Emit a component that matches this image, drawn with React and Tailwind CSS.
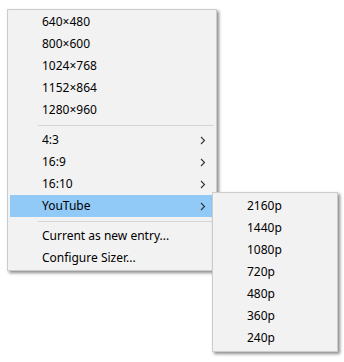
import React from "react";

function Chevron() {
  return (
    <svg width="6" height="9" viewBox="0 0 6 9" className="block">
      <polyline points="1,1 4.5,4.5 1,8" fill="none" stroke="#333" strokeWidth="1.1" />
    </svg>
  );
}

function Item({ label, arrow, active }) {
  return (
    <div
      className={`flex h-[22px] items-center justify-between pl-[32px] pr-[8px] mx-[2px] ${
        active ? "bg-[#91c9f7]" : ""
      }`}
    >
      <span>{label}</span>
      {arrow ? <Chevron /> : null}
    </div>
  );
}

function Sep() {
  return (
    <div className="h-[8px] flex items-center ml-[30px] mr-[2px]">
      <div className="h-px w-full bg-[#d5d5d5]" />
    </div>
  );
}

export default function App() {
  return (
    <div
      className="relative w-[344px] h-[362px] bg-white text-[12px] text-black"
      style={{ fontFamily: '"Noto Sans", "Open Sans", sans-serif' }}
    >
      <div className="absolute left-[7px] top-[9px] w-[210px] border border-[#cccccc] bg-[#f2f2f2] py-px shadow-[2px_2px_3px_rgba(0,0,0,0.45)]">
        <Item label="640×480" />
        <Item label="800×600" />
        <Item label="1024×768" />
        <Item label="1152×864" />
        <Item label="1280×960" />
        <Sep />
        <Item label="4:3" arrow />
        <Item label="16:9" arrow />
        <Item label="16:10" arrow />
        <Item label="YouTube" arrow active />
        <Sep />
        <Item label="Current as new entry..." />
        <Item label="Configure Sizer..." />
      </div>
      <div className="absolute left-[212px] top-[192px] w-[126px] border border-[#cccccc] bg-[#f2f2f2] py-[2px] shadow-[2px_2px_3px_rgba(0,0,0,0.45)]">
        {["2160p", "1440p", "1080p", "720p", "480p", "360p", "240p"].map((l) => (
          <div key={l} className="flex h-[22px] items-center pl-[34px]">
            {l}
          </div>
        ))}
      </div>
    </div>
  );
}
